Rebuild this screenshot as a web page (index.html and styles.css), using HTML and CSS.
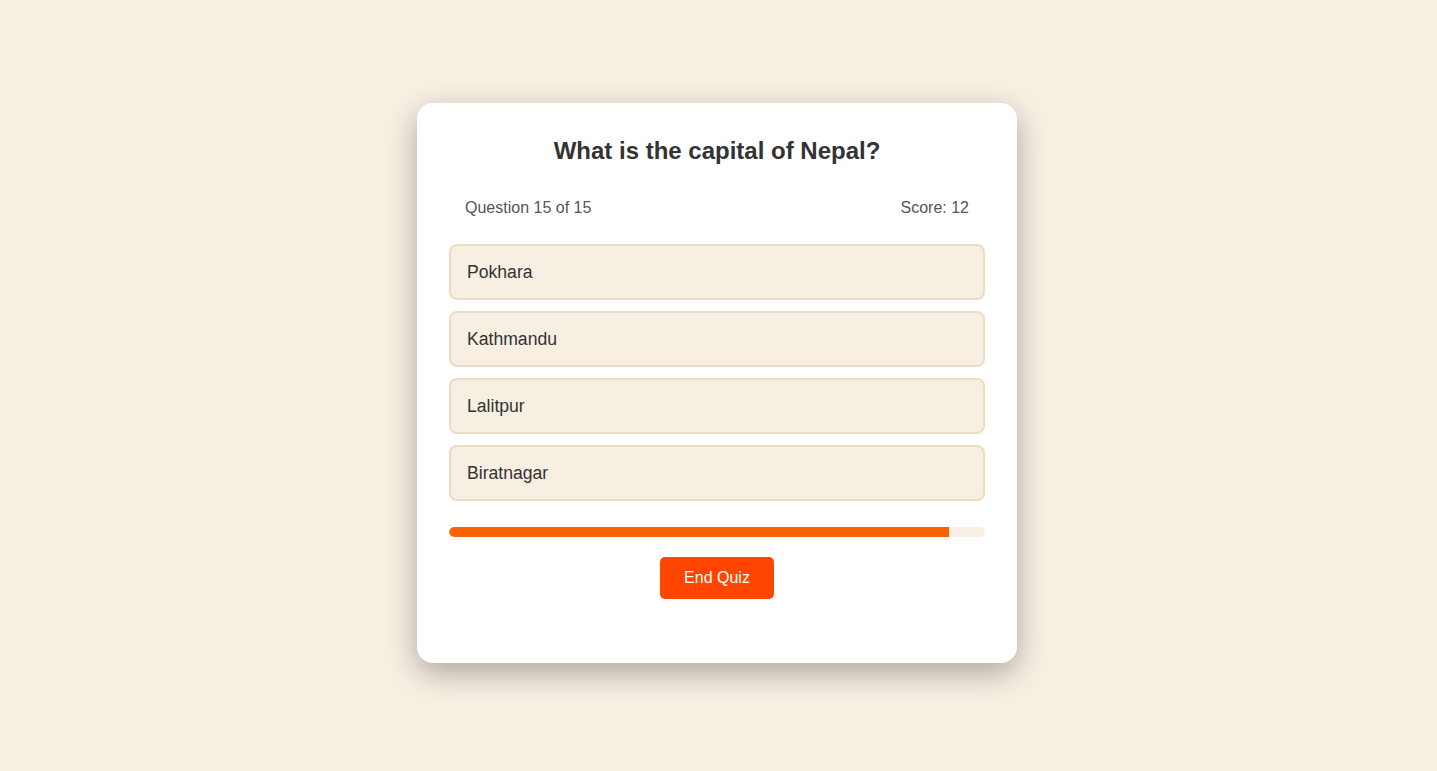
FILE: index.html
```html
<!DOCTYPE html>
<html lang="en">
<head>
<meta charset="utf-8">
<title>Quiz</title>
<link rel="stylesheet" href="styles.css">
</head>
<body>
<div class="card">
  <h2 class="question">What is the capital of Nepal?</h2>
  <div class="meta">
    <span>Question 15 of 15</span>
    <span>Score: 12</span>
  </div>
  <div class="options">
    <div class="option">Pokhara</div>
    <div class="option">Kathmandu</div>
    <div class="option">Lalitpur</div>
    <div class="option">Biratnagar</div>
  </div>
  <div class="progress"><div class="progress-fill" style="width: 93.33%"></div></div>
  <div class="actions"><button class="end-btn">End Quiz</button></div>
</div>
</body>
</html>
```
FILE: styles.css
```css
* { box-sizing: border-box; }
html, body { margin: 0; padding: 0; }
body {
  background: #f8efe3;
  font-family: "Liberation Sans", Arial, sans-serif;
  color: #333;
  min-height: 100vh;
  display: flex;
  align-items: center;
  justify-content: center;
  padding: 0 3px 5px 0;
}
.card {
  width: 600px;
  height: 560px;
  background: #fff;
  border-radius: 16px;
  box-shadow: 0 10px 30px rgba(0, 0, 0, 0.3);
  padding: 32px;
}
.question {
  margin: 0;
  font-size: 24px;
  line-height: 32px;
  font-weight: bold;
  text-align: center;
  color: #333;
}
.meta {
  display: flex;
  justify-content: space-between;
  margin-top: 31px;
  padding: 0 16px;
  font-size: 16px;
  line-height: 20px;
  color: #555;
}
.options {
  display: flex;
  flex-direction: column;
  gap: 11px;
  margin-top: 26px;
}
.option {
  background: #f8efe3;
  border: 2px solid #ecdcc3;
  border-radius: 8px;
  padding: 15px 16px;
  font-size: 17.6px;
  line-height: 22px;
  color: #333;
}
.progress {
  margin-top: 26px;
  height: 10px;
  border-radius: 5px;
  background: #f8efe3;
  overflow: hidden;
}
.progress-fill {
  height: 100%;
  background: #f96302;
  border-radius: 5px 0 0 5px;
}
.actions {
  display: flex;
  justify-content: center;
  margin-top: 20px;
}
.end-btn {
  width: 114px;
  height: 42px;
  border: none;
  border-radius: 5px;
  background: #ff4500;
  color: #fff;
  font-family: "Liberation Sans", Arial, sans-serif;
  font-size: 16px;
  cursor: pointer;
}
```
